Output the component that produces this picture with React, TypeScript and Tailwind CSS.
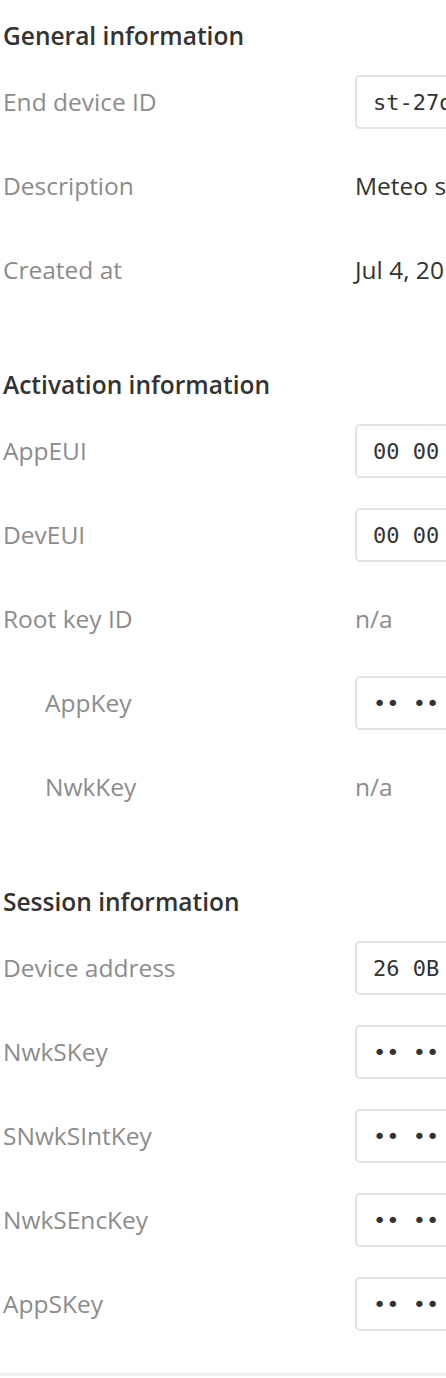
import React from "react";

type Row = {
  label: string;
  value: string;
  kind: "code" | "text" | "muted";
  indent?: boolean;
};

const SECTIONS: { title: string; rows: Row[] }[] = [
  {
    title: "General information",
    rows: [
      { label: "End device ID", value: "st-27d9-weather-station", kind: "code" },
      { label: "Description", value: "Meteo station on the roof", kind: "text" },
      { label: "Created at", value: "Jul 4, 2019 10:21:43", kind: "text" },
    ],
  },
  {
    title: "Activation information",
    rows: [
      { label: "AppEUI", value: "00 00 00 00 00 00 00 00", kind: "code" },
      { label: "DevEUI", value: "00 00 00 00 00 00 00 00", kind: "code" },
      { label: "Root key ID", value: "n/a", kind: "muted" },
      { label: "AppKey", value: "•• •• •• •• •• •• •• ••", kind: "code", indent: true },
      { label: "NwkKey", value: "n/a", kind: "muted", indent: true },
    ],
  },
  {
    title: "Session information",
    rows: [
      { label: "Device address", value: "26 0B 4A 31", kind: "code" },
      { label: "NwkSKey", value: "•• •• •• •• •• •• •• ••", kind: "code" },
      { label: "SNwkSIntKey", value: "•• •• •• •• •• •• •• ••", kind: "code" },
      { label: "NwkSEncKey", value: "•• •• •• •• •• •• •• ••", kind: "code" },
      { label: "AppSKey", value: "•• •• •• •• •• •• •• ••", kind: "code" },
    ],
  },
];

function Value({ row }: { row: Row }) {
  if (row.kind === "code") {
    return (
      <div className="h-[54px] w-[400px] shrink-0 rounded-[5px] border-2 border-[#e3e3e3] pl-[16px] flex items-center whitespace-nowrap font-['DejaVu_Sans_Mono',monospace] text-[22px] text-[#333]">
        {row.value}
      </div>
    );
  }
  return (
    <span
      className={
        row.kind === "muted"
          ? "whitespace-nowrap text-[#8c8c8c]"
          : "whitespace-nowrap text-[#333]"
      }
    >
      {row.value}
    </span>
  );
}

export default function App() {
  return (
    <div className="w-[446px] h-[1378px] overflow-hidden bg-white font-['Open_Sans',sans-serif] text-[24.5px]">
      <div className="flex flex-col gap-[55px] pt-[18px] pl-[3px]">
        {SECTIONS.map((section) => (
          <section key={section.title}>
            <h3 className="h-[36px] leading-[36px] font-semibold text-[#333] mb-[6px]">
              {section.title}
            </h3>
            {section.rows.map((row) => (
              <div key={row.label} className="h-[84px] flex items-center">
                <div
                  className={
                    row.indent
                      ? "w-[352px] shrink-0 pl-[42px] text-[#8c8c8c]"
                      : "w-[352px] shrink-0 text-[#8c8c8c]"
                  }
                >
                  {row.label}
                </div>
                <Value row={row} />
              </div>
            ))}
          </section>
        ))}
      </div>
      <div className="mt-[27px] h-[3px] bg-[#efefef]" />
    </div>
  );
}
